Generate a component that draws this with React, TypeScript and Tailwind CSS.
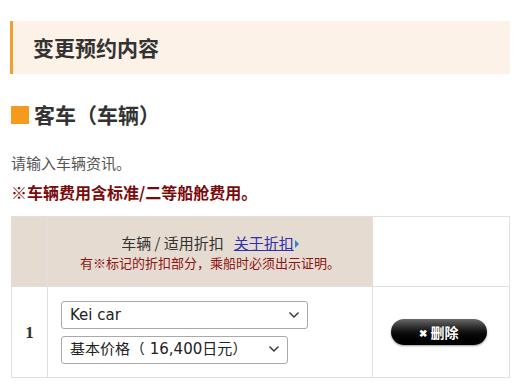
import React from "react";

const CJK = { fontFamily: '"Noto Sans CJK SC", "Noto Sans", sans-serif' };
const FIELD = { fontFamily: '"DejaVu Sans", "Noto Sans CJK SC", sans-serif' };

function Chevron() {
  return (
    <svg width="12" height="8" viewBox="0 0 12 8" className="absolute right-[8px] top-1/2 -translate-y-1/2 pointer-events-none">
      <path d="M1.5 1.5 L6 6 L10.5 1.5" fill="none" stroke="#333" strokeWidth="1.4" />
    </svg>
  );
}

function Select({ value, width }: { value: string; width: string }) {
  return (
    <div className={`relative ${width}`}>
      <select
        defaultValue={value}
        className="appearance-none w-full h-[28px] border border-[#a9a9a9] rounded-[3px] bg-white pl-[8px] text-[15px] text-[#222] leading-none outline-none"
        style={FIELD}
      >
        <option>{value}</option>
      </select>
      <Chevron />
    </div>
  );
}

export default function App() {
  return (
    <div className="w-[520px] h-[391px] bg-white overflow-hidden" style={CJK}>
      <div className="pt-[21px] px-[10px]">
        <div className="h-[53px] bg-[#fdf2e7] border-l-[3px] border-[#f0a030] flex items-center pl-[20px]">
          <h2 className="text-[21px] font-bold text-[#333]">变更预约内容</h2>
        </div>

        <div className="mt-[30px] flex items-center gap-[5px] pl-[1px]">
          <span className="w-[18px] h-[18px] bg-[#f39a1f]" />
          <h3 className="text-[21px] font-bold text-[#333] leading-none">客车（车辆）</h3>
        </div>

        <p className="mt-[28px] pl-[1px] text-[15px] text-[#555] leading-[20px]">请输入车辆资讯。</p>
        <p className="mt-[9px] pl-[1px] text-[16px] font-bold text-[#7a0a0a] leading-[20px]">※车辆费用含标准/二等船舱费用。</p>

        <table className="mt-[14px] ml-[1px] w-[499px] border-collapse">
          <tbody>
            <tr className="h-[70px]">
              <td className="w-[36px] bg-[#e6dbd0] border border-[#e0e0e0]" />
              <td className="w-[325px] bg-[#e6dbd0] border border-[#e0e0e0] text-center align-middle">
                <div className="text-[15px] text-[#333] leading-[21px]">
                  车辆 / 适用折扣
                  <a href="#" className="ml-[10px] text-[#2f2fb0] underline">关于折扣</a>
                  <span className="inline-block align-middle ml-[1px] w-0 h-0 border-y-[4px] border-y-transparent border-l-[4px] border-l-[#3a7fc0]" />
                </div>
                <div className="text-[13px] text-[#8b1414] leading-[18px] mt-[1px]">有※标记的折扣部分，乘船时必须出示证明。</div>
              </td>
              <td className="bg-white border border-[#e0e0e0]" />
            </tr>
            <tr className="h-[91px]">
              <td className="border border-[#e0e0e0] text-center align-middle">
                <span className="text-[17px] font-bold text-[#333]" style={{ fontFamily: '"Liberation Serif", serif' }}>1</span>
              </td>
              <td className="border border-[#e0e0e0] pl-[13px] align-middle">
                <div className="flex flex-col gap-[6px]">
                  <Select value="Kei car" width="w-[247px]" />
                  <Select value="基本价格（ 16,400日元）" width="w-[227px]" />
                </div>
              </td>
              <td className="border border-[#e0e0e0] align-middle">
                <div className="flex justify-center pr-[5px]">
                  <button className="w-[96px] h-[26px] rounded-full bg-gradient-to-b from-[#6a6a6a] via-[#111] to-[#000] text-white text-[14px] font-bold flex items-center justify-center gap-[4px] shadow-[0_1px_2px_rgba(0,0,0,0.4)]">
                    <span className="text-[10px]">✖</span>删除
                  </button>
                </div>
              </td>
            </tr>
          </tbody>
        </table>
      </div>
    </div>
  );
}
